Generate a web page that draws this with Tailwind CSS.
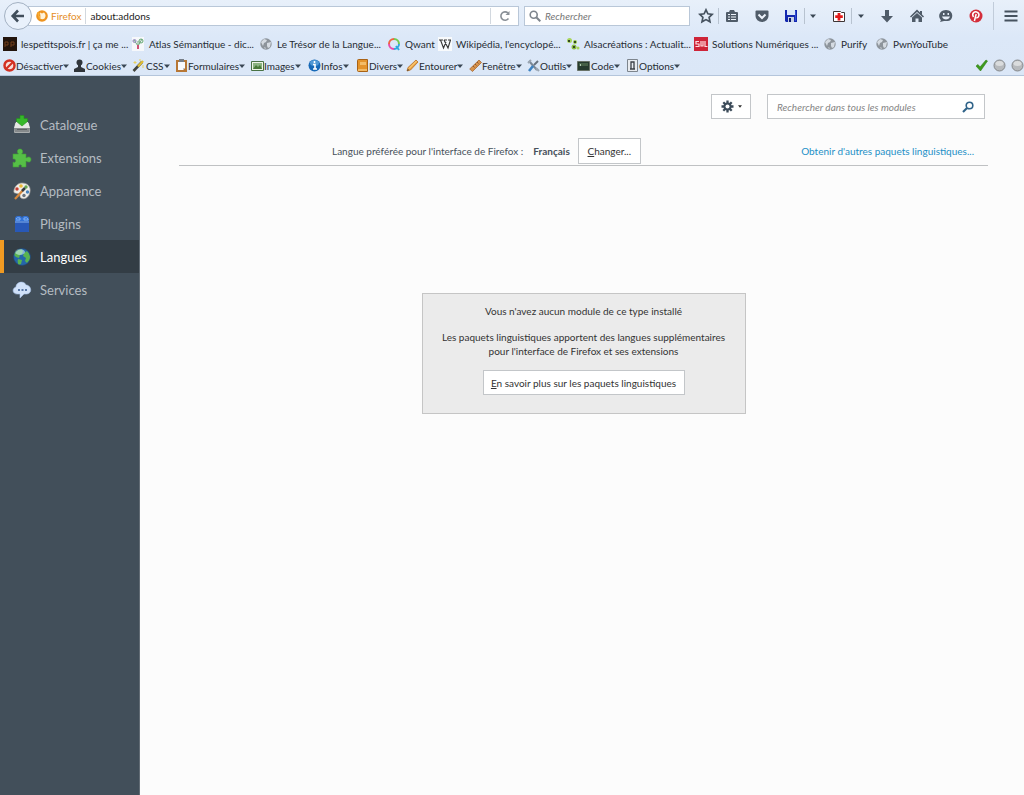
<!DOCTYPE html>
<html lang="fr">
<head>
<meta charset="utf-8">
<meta name="viewport" content="width=device-width, initial-scale=1">
<title>Gestionnaire de modules complémentaires</title>
<script src="https://cdn.jsdelivr.net/npm/@tailwindcss/browser@4"></script>
</head>
<body class="flex min-h-screen flex-col bg-[#fcfcfc] font-['Lato','Noto_Sans',sans-serif] text-[10px] leading-[14px] text-[#262c33]">
<svg class="hidden" aria-hidden="true">
  <symbol id="globe" viewBox="0 0 14 14"><circle cx="7" cy="7" r="5.7" fill="#8d949b"/><path d="M2 5l3-3 3 1-1 2-2 1-1 3zM8 6l4-1-1 5-2 1-1-2zM5 10l2 1-1 1z" fill="#d5dbe2"/></symbol>
  <symbol id="caret" viewBox="0 0 6 4"><path d="M0 .5h6L3 4z" fill="#3a4754"/></symbol>
</svg>

<header class="overflow-hidden border-b border-[#b4c5db] bg-linear-to-b from-[#e8f0fa] via-[#dce8f8] to-[#dbe7f7]">
  <div class="flex h-8 items-center pl-1">
    <button aria-label="Précédent" class="z-10 flex size-7 shrink-0 items-center justify-center rounded-full border border-[#a3b1c2] bg-[#e9f1fb]">
      <svg class="size-4" viewBox="0 0 16 16" fill="none" stroke="#414e5b" stroke-width="2.6"><path d="M14 8H3M8 2.500L2.700 8 8 13.500"/></svg>
    </button>
    <div class="-ml-1 flex h-5 flex-1 items-center border border-[#b9c7d8] bg-white pl-[7px]">
      <svg class="size-3 shrink-0" viewBox="0 0 12 12"><circle cx="6" cy="6" r="5.800" fill="#ee9420"/><path d="M4 2.500l2 1 2-1c2 2 2 4 .5 6-2 1.500-5 .5-5.500-2l1.500.5z" fill="#fff3d9"/><path d="M1 2l3 1-1 3 2 2-2 1z" fill="#f7ad35"/></svg>
      <span class="ml-[3px] shrink-0 text-[#e58e27]">Firefox</span>
      <span class="mx-1 h-4 w-px bg-[#d2d8df]"></span>
      <input aria-label="Adresse" value="about:addons" class="min-w-0 flex-1 bg-transparent text-[#222] outline-none">
      <button aria-label="Actualiser" class="flex h-4 w-7 items-center justify-center border-l border-[#d2d8df]">
        <svg class="size-3" viewBox="0 0 12 12" fill="none" stroke="#8a9097" stroke-width="1.600"><path d="M9.500 8.500A4.200 4.200 0 1 1 9 3"/><path d="M10.500 1v4h-4z" fill="#8a9097" stroke="none"/></svg>
      </button>
    </div>
    <label class="ml-[5px] flex h-5 w-[166px] items-center border border-[#b9c7d8] bg-white pl-1">
      <svg class="size-3 shrink-0" viewBox="0 0 12 12" fill="none" stroke="#7e858d" stroke-width="1.600"><circle cx="4.700" cy="4.700" r="3.500"/><path d="M7.300 7.300l4 4" stroke-width="2"/></svg>
      <input aria-label="Rechercher" placeholder="Rechercher" class="ml-1 min-w-0 flex-1 italic outline-none placeholder:text-[#777]">
    </label>
    <div class="flex w-[334px] shrink-0 items-center">
      <button aria-label="Marquer cette page" class="ml-2 w-4"><svg class="size-4" viewBox="0 0 16 16" fill="none" stroke="#46525f" stroke-width="1.700"><path d="M8 1.800l1.900 4 4.400.5-3.200 3 .9 4.500L8 11.600l-4 2.200.9-4.500-3.200-3 4.400-.5z"/></svg></button>
      <span class="ml-[4px] h-4 w-px bg-[#b8c3d0]"></span>
      <button aria-label="Afficher les marque-pages" class="ml-[5px] w-4"><svg class="size-4" viewBox="0 0 16 16"><path d="M6 2h4l1 2h2q1 0 1 1v8q0 1-1 1H3q-1 0-1-1V5q0-1 1-1h2z" fill="#505c69"/><path d="M4 6h2v1H4zm3 0h5v1H7zM4 8.500h2v1H4zm3 0h5v1H7zM4 11h2v1H4zm3 0h5v1H7z" fill="#edf3fb"/></svg></button>
      <button aria-label="Pocket" class="ml-[14px] w-4"><svg class="size-4" viewBox="0 0 16 16"><path d="M2.500 2.500h11q1 0 1 1V8a6.500 6 0 0 1-13 0V3.500q0-1 1-1z" fill="#505c69"/><path d="M4.500 6.500L8 10l3.500-3.500" fill="none" stroke="#edf3fb" stroke-width="2"/></svg></button>
      <button aria-label="Enregistrer" class="ml-[13px] w-4"><svg class="size-4" viewBox="0 0 16 16"><path d="M2 2h12v12H3l-1-1z" fill="#1428b0"/><path d="M4 2h8v5H4z" fill="#dce9fa"/><path d="M5 9h6v5H5z" fill="#c9d2e3"/><path d="M6 10h2v4H6z" fill="#101c70"/><path d="M12.500 3v10" stroke="#334fd2"/></svg></button>
      <span class="ml-[5px] h-4 w-px bg-[#b8c3d0]"></span>
      <button aria-label="Options d’enregistrement" class="ml-[5px] w-[6px]"><svg class="h-1 w-[6px]"><use href="#caret"/></svg></button>
      <button aria-label="Ajouter" class="ml-[15px] w-4"><svg class="size-4" viewBox="0 0 16 16"><path d="M2.500 3.500v10h11v-9h-3l-1-1z" fill="#fff" stroke="#3e3434"/><path d="M8 5v7.500M4.200 8.700h7.600" stroke="#e31b1b" stroke-width="2.800"/></svg></button>
      <span class="ml-[4px] h-4 w-px bg-[#b8c3d0]"></span>
      <button aria-label="Options d’ajout" class="ml-[6px] w-[6px]"><svg class="h-1 w-[6px]"><use href="#caret"/></svg></button>
      <button aria-label="Téléchargements" class="ml-[15px] w-4"><svg class="size-4" viewBox="0 0 16 16"><path d="M6 2h4v6h4l-6 6.500L2 8h4z" fill="#505c69"/></svg></button>
      <button aria-label="Accueil" class="ml-[14px] w-4"><svg class="size-4" viewBox="0 0 16 16"><path d="M8 1.500l3 3V3h2v3.500l2 2-1 1L8 4 2 9.500l-1-1z" fill="#505c69"/><path d="M3 9.500L8 5l5 4.500V14H9.500v-3.500h-3V14H3z" fill="#505c69"/></svg></button>
      <button aria-label="Hello" class="ml-[13px] w-4"><svg class="size-4" viewBox="0 0 16 16"><path d="M8 2c8 0 8 10 2 11H6l-4 1 1-2C-1 8 2 2 8 2z" fill="#505c69"/><path d="M5 5h1.500v2H5zm4.500 0H11v2H9.500zM4 8.500h8c-1 4-7 4-8 0z" fill="#e5edf8"/></svg></button>
      <button aria-label="Pinterest" class="ml-[14px] w-4"><svg class="size-4" viewBox="0 0 16 16"><circle cx="8" cy="8" r="6.500" fill="#d42e3b"/><path d="M5.500 9C3 5 7 3 9.500 4.300c3 1.700.8 6.200-1.200 5.300M8.200 6l-1.800 7" fill="none" stroke="#fff" stroke-width="1.500"/></svg></button>
      <span class="ml-[9px] h-7 w-px bg-[#c1ccda]"></span>
      <button aria-label="Menu" class="ml-[9px] w-4"><svg class="size-4" viewBox="0 0 16 16"><path d="M1.500 3.500h13M1.500 8h13M1.500 12.500h13" stroke="#46525f" stroke-width="2.200"/></svg></button>
    </div>
  </div>

  <nav aria-label="Marque-pages" class="flex h-6 items-center pl-[3px] whitespace-nowrap *:flex *:shrink-0 *:items-center *:gap-1">
    <a href="#" class="w-32"><svg class="size-[14px] shrink-0" viewBox="0 0 14 14"><path d="M0 0h14v14H0z" fill="#23150d"/><path d="M2 10V5h3v3H2m6 2V5h3v3H8" fill="none" stroke="#74401c"/></svg>lespetitspois.fr | ça me ...</a>
    <a href="#" class="w-32"><svg class="size-[14px] shrink-0" viewBox="0 0 14 14"><path d="M1 0h12v14H1z" fill="#f6f8fb"/><path d="M7 9L3 3M7 9l4-7M7 9V4" stroke="#72a77e"/><circle cx="3.500" cy="4" r="1.500" fill="none" stroke="#8d83bc"/><circle cx="10" cy="4" r="2" fill="none" stroke="#63a772"/><path d="M7 8v4" stroke="#ce5375" stroke-width="2"/></svg>Atlas Sémantique - dic...</a>
    <a href="#" class="w-32"><svg class="size-[14px] shrink-0"><use href="#globe"/></svg>Le Trésor de la Langue...</a>
    <a href="#" class="w-[51px]"><svg class="size-[14px] shrink-0" viewBox="0 0 14 14" fill="none" stroke-width="2"><path d="M7 2a5 5 0 0 0-5 5" stroke="#ef6540"/><path d="M2 7a5 5 0 0 0 5 5" stroke="#e94cab"/><path d="M7 2a5 5 0 0 1 5 5" stroke="#73cb50"/><path d="M12 7a5 5 0 0 1-5 5M9 9l3 4" stroke="#31a8df"/></svg>Qwant</a>
    <a href="#" class="w-32"><svg class="size-[14px] shrink-0" viewBox="0 0 14 14"><path d="M0 0h14v14H0z" fill="#f8fafc"/><path d="M1 3h4M6 3h3M10 3h3M2.500 3l3 8L8 5M6 3l4 8 2.500-8" fill="none" stroke="#363636" stroke-width="1.100"/></svg>Wikipédia, l'encyclopé...</a>
    <a href="#" class="w-32"><svg class="size-[14px] shrink-0" viewBox="0 0 14 14"><circle cx="3.500" cy="3.500" r="2.500" fill="#a7d55b"/><circle cx="9" cy="5" r="2" fill="#9aca4b"/><circle cx="8" cy="10" r="2.500" fill="#8abd40"/><circle cx="12" cy="11" r="1.500" fill="#a7d55b"/><path d="M2 3h2v2H2zm6 1h2v2H8zM7 9h2v2H7z" fill="#344622"/></svg>Alsacréations : Actualit...</a>
    <a href="#" class="w-32"><svg class="size-[14px] shrink-0" viewBox="0 0 14 14"><path d="M0 0h14v14H0z" fill="#ce2438"/><path d="M5 4.500H2V7h3v2.500H1.500M7 4v5h2V4m2 0v5.500h2.500" fill="none" stroke="#ffdce0" stroke-width="1.200"/></svg>Solutions Numériques ...</a>
    <a href="#" class="ml-px w-[52px]"><svg class="size-[14px] shrink-0"><use href="#globe"/></svg>Purify</a>
    <a href="#"><svg class="size-[14px] shrink-0"><use href="#globe"/></svg>PwnYouTube</a>
  </nav>

  <div class="flex h-[19px] items-center pl-[3px] whitespace-nowrap">
    <div role="toolbar" aria-label="Outils de développement" class="flex flex-1 *:flex *:shrink-0 *:items-center">
      <button class="w-[70px]"><svg class="size-[13px]" viewBox="0 0 13 13"><circle cx="6.500" cy="6.500" r="5" fill="#f7dfdb" stroke="#d33022" stroke-width="2.500"/><path d="M3 10l7-7" stroke="#d33022" stroke-width="2.200"/></svg>Désactiver<svg class="h-1 w-[6px]"><use href="#caret"/></svg></button>
      <button class="w-[59px]"><svg class="size-[13px]" viewBox="0 0 13 13" fill="#30353b"><circle cx="6.500" cy="3.500" r="3"/><path d="M5 6h3v2l4 2v3H1v-3l4-2z"/></svg>Cookies<svg class="h-1 w-[6px]"><use href="#caret"/></svg></button>
      <button class="w-[43px]"><svg class="mr-px size-[13px]" viewBox="0 0 13 13"><path d="M1.500 12L10 3" stroke="#41433d" stroke-width="2.600"/><path d="M6 7.500L11 2" stroke="#dfbd37" stroke-width="2.400"/><path d="M3 2v3M1.500 3.500h3M8 0v2M11 6v3" stroke="#e9d15f"/></svg>CSS<svg class="h-1 w-[6px]"><use href="#caret"/></svg></button>
      <button class="w-[76px]"><svg class="size-[13px]" viewBox="0 0 13 13"><path d="M1 1h11v12H1z" fill="#b77735"/><path d="M3 3h7v6l-2 2H3z" fill="#f8f9fc"/><path d="M4 0h5v3H4z" fill="#777e87"/><path d="M10 9l-2 2V9z" fill="#b9c4d2"/></svg>Formulaires<svg class="h-1 w-[6px]"><use href="#caret"/></svg></button>
      <button class="w-[57px]"><svg class="size-[13px]" viewBox="0 0 13 13"><path d="M.5 2.500h12v9H.5z" fill="#eef4e8" stroke="#497244"/><path d="M2 4h9v6H2z" fill="#8bb481"/><path d="M2 10l3-4 2 2 2-2 2 4z" fill="#487a38"/></svg>Images<svg class="h-1 w-[6px]"><use href="#caret"/></svg></button>
      <button class="w-[48px]"><svg class="size-[13px]" viewBox="0 0 13 13"><circle cx="6.500" cy="6.500" r="6" fill="#1769b7"/><ellipse cx="6.500" cy="4" rx="4.500" ry="3" fill="#5199d5"/><path d="M6.500 2v2M5 5.500h2V10M5 10h4" fill="none" stroke="#fff" stroke-width="1.600"/></svg>Infos<svg class="h-1 w-[6px]"><use href="#caret"/></svg></button>
      <button class="w-[50px]"><svg class="size-[13px]" viewBox="0 0 13 13"><path d="M1.500 1.500q0-1 1-1h9v12h-9q-1 0-1-1z" fill="#e4942b" stroke="#a96215"/><path d="M4 3h6v3H4z" fill="#f3bd68"/><path d="M2 11h9" stroke="#ffe2a4"/></svg>Divers<svg class="h-1 w-[6px]"><use href="#caret"/></svg></button>
      <button class="w-[63px]"><svg class="size-[13px]" viewBox="0 0 13 13"><path d="M1 12l1-3.500L10 1l2 2-7.500 8z" fill="#eca441" stroke="#b46d27" stroke-width=".8"/><path d="M3 9.500L10.500 2" stroke="#ffdc91"/><path d="M1 12l1-2 1 1z" fill="#363636"/></svg>Entourer<svg class="h-1 w-[6px]"><use href="#caret"/></svg></button>
      <button class="w-[58px]"><svg class="size-[13px]" viewBox="0 0 13 13"><path d="M.7 10L10 1l2.500 2.500-9 9z" fill="#d6924c" stroke="#a76935" stroke-width=".8"/><path d="M4 7l1.500 1.500M6 5l1.500 1.500M8 3l1.500 1.500" stroke="#8b5731"/></svg>Fenêtre<svg class="h-1 w-[6px]"><use href="#caret"/></svg></button>
      <button class="w-[50px]"><svg class="size-[13px]" viewBox="0 0 13 13" fill="none"><path d="M2 2l8 9" stroke="#7a8795" stroke-width="2"/><path d="M1 4l3-3M9 9l3 3" stroke="#9ba6b2" stroke-width="2"/><path d="M11 2L7 6" stroke="#66717d" stroke-width="2"/><path d="M6 7l-4 5" stroke="#3f83c1" stroke-width="2.600"/></svg>Outils<svg class="h-1 w-[6px]"><use href="#caret"/></svg></button>
      <button class="w-[49px]"><svg class="mr-px size-[13px]" viewBox="0 0 13 13"><path d="M.5 2.500h12v9H.5z" fill="#263b2e" stroke="#687267"/><path d="M2 4h9v3H2z" fill="#456046"/><path d="M3 5l1 1-1 1" fill="none" stroke="#b1cab1"/></svg>Code<svg class="h-1 w-[6px]"><use href="#caret"/></svg></button>
      <button><svg class="size-[13px]" viewBox="0 0 13 13"><path d="M1.500.5h10v12h-10z" fill="#e8ebef" stroke="#7d858d"/><path d="M5 10V3h3v7M4 10h5" fill="none" stroke="#3b3f44" stroke-width="1.300"/></svg>Options<svg class="h-1 w-[6px]"><use href="#caret"/></svg></button>
    </div>
    <div class="flex gap-[5px]">
      <svg class="size-[13px]" viewBox="0 0 13 13"><path d="M1 7l2-1.500L5 8l6-7 1.500 1-7 10z" fill="#3d9b1c" stroke="#328018" stroke-width=".6"/></svg>
      <svg class="size-[13px]" viewBox="0 0 13 13"><circle cx="6.500" cy="6.500" r="5.500" fill="#b7babd" stroke="#85888b"/><ellipse cx="6.500" cy="4.500" rx="4" ry="2.500" fill="#dadcdd"/></svg>
      <svg class="size-[13px]" viewBox="0 0 13 13"><circle cx="6.500" cy="6.500" r="5.500" fill="#b7babd" stroke="#85888b"/><ellipse cx="6.500" cy="4.500" rx="4" ry="2.500" fill="#dadcdd"/></svg>
    </div>
  </div>
</header>

<div class="flex flex-1">
  <nav aria-label="Catégories" class="w-[140px] shrink-0 border-r border-[#626c75] bg-[#424f5a] pt-8 text-[13px] text-[#b5bcc2] *:flex *:h-[33px] *:items-center *:gap-2 *:border-l-4 *:border-transparent *:pl-2">
    <a href="#"><svg class="size-5" viewBox="0 0 20 20"><path d="M3 8h14l1 9q0 1-1 1H3q-1 0-1-1z" fill="#a9adae"/><path d="M4 7h12l2 6H2z" fill="#e6e7e5"/><path d="M3 13h14v4H3z" fill="#85898b"/><path d="M5 14h10v1H5z" fill="#5d6264"/><path d="M8 .5h4v3h3.500v3L10 11 4.500 6.500v-3H8z" fill="#36b82a" stroke="#258f1e" stroke-width=".6"/></svg>Catalogue</a>
    <a href="#"><svg class="size-5" viewBox="0 0 20 20"><path d="M1 6h5.500C4 3 6 1 8 1s4 2 1.700 5H14v4c3-2 5-1 5 1.500S17 15 14 13v6H9.500c1.500-3-4-3-2.500 0H1v-5c3 2 4-4 0-3z" fill="#56bf47" stroke="#42a037" stroke-width=".6"/></svg>Extensions</a>
    <a href="#"><svg class="size-5" viewBox="0 0 20 20"><path d="M10 2c6 0 9 4 8 9-1 6-6 8-9 6-2-1 0-3-2-4-3-1-6 0-5-4s4-7 8-7z" fill="#f0eee9" stroke="#9d9b98" stroke-width=".7"/><circle cx="9" cy="5" r="1.800" fill="#edb936"/><circle cx="14" cy="6" r="1.700" fill="#68a74d"/><circle cx="15.500" cy="11" r="1.700" fill="#4781bb"/><circle cx="12" cy="14.500" r="1.700" fill="#69727c"/><circle cx="5" cy="8" r="1.700" fill="#c63f32"/><path d="M3 18L12 8" stroke="#d4873c" stroke-width="2.200"/><path d="M10 10l3-3" stroke="#353b41" stroke-width="2.500"/></svg>Apparence</a>
    <a href="#"><svg class="size-5" viewBox="0 0 20 20"><path d="M3 5q0-3 3-3h2q2 0 2 2 0-2 2-2h2q3 0 3 3v12q0 1-1 1H4q-1 0-1-1z" fill="#3272d6"/><path d="M3 7h14v10q0 1-1 1H4q-1 0-1-1z" fill="#2858b7"/><path d="M4 5q1-2 4-1v2H4m8 0V4q3-1 4 1v1zM3 8h14" fill="none" stroke="#82b2f1"/></svg>Plugins</a>
    <a href="#" aria-current="page" class="border-[#f09a22]! bg-[#333d45] text-white"><svg class="size-5" viewBox="0 0 20 20"><circle cx="10" cy="10" r="8.500" fill="#2566a9"/><path d="M5 3l4-1 2 2-1 3-2 1-1 3-3-1-2-2q0-3 3-5zM12 6l3-2q4 4 3 8l-3 4-2-2 1-3-3-2zM6 12l4 1-1 4-2 1q-2-2-1-6z" fill="#59b350"/><ellipse cx="8" cy="5" rx="5" ry="3" fill="#d6f3ff" fill-opacity=".55"/><circle cx="10" cy="10" r="8.500" fill="none" stroke="#234670" stroke-width=".7"/></svg>Langues</a>
    <a href="#"><svg class="size-5" viewBox="0 0 20 20"><path d="M5 14C0 14 0 8 4 7c0-5 8-7 10-2 5 0 7 8 1 9h-3l-4 4v-4z" fill="#d0e1f9" stroke="#a9c5e9" stroke-width=".6"/><path d="M6 9h2v2H6zm3.500 0h2v2h-2zM13 9h2v2h-2z" fill="#5878a6"/></svg>Services</a>
  </nav>

  <main class="flex-1 pt-[18px] pr-9 pl-[39px]">
    <div class="flex justify-end gap-4 pr-[3px]">
      <button aria-label="Outils pour tous les modules" class="flex h-[25px] w-10 items-center justify-center gap-1 border border-[#c3c6c9] bg-white">
        <svg class="size-[13px]" viewBox="0 0 13 13"><g stroke="#3c4b59" stroke-width="2.300"><path d="M6.500.5v12M.5 6.500h12M2.300 2.300l8.400 8.400M2.300 10.700l8.400-8.400"/></g><circle cx="6.500" cy="6.500" r="4" fill="#3c4b59"/><circle cx="6.500" cy="6.500" r="2" fill="#fff"/></svg>
        <svg class="h-[3px] w-1" viewBox="0 0 6 4"><path d="M0 0h6L3 4z" fill="#333"/></svg>
      </button>
      <label class="flex h-[25px] w-[218px] items-center border border-[#c3c6c9] bg-white pr-[10px] pl-[9px]">
        <input aria-label="Rechercher dans tous les modules" placeholder="Rechercher dans tous les modules" class="min-w-0 flex-1 italic outline-none placeholder:text-[#858585]">
        <svg class="size-3 shrink-0" viewBox="0 0 12 12" fill="none" stroke="#2f6389"><circle cx="7.500" cy="4.500" r="3.300" stroke-width="1.600"/><path d="M5 7l-4 4" stroke-width="2.200"/></svg>
      </label>
    </div>

    <div class="mt-[19px] flex items-center border-b border-[#bfc1c3] pb-px text-[#47515b]">
      <span class="ml-[153px]">Langue préférée pour l'interface de Firefox :</span>
      <strong class="ml-[10px] font-bold">Français</strong>
      <button class="ml-2 h-[26px] w-[63px] border border-[#c3c6c9] bg-white text-[#333]"><span class="underline">C</span>hanger...</button>
      <a href="#" class="mr-[14px] ml-auto text-[#2490c7]">Obtenir d'autres paquets linguistiques...</a>
    </div>

    <section class="mx-auto mt-[127px] w-[324px] border border-[#c5c5c5] bg-[#ebebeb] pt-[10px] pb-[18px] text-center text-[#333]">
      <h1>Vous n'avez aucun module de ce type installé</h1>
      <p class="mt-3">Les paquets linguistiques apportent des langues supplémentaires<br>pour l'interface de Firefox et ses extensions</p>
      <button class="mt-3 h-[25px] w-[202px] border border-[#c3c6c9] bg-white"><span class="underline">E</span>n savoir plus sur les paquets linguistiques</button>
    </section>
  </main>
</div>
</body>
</html>
